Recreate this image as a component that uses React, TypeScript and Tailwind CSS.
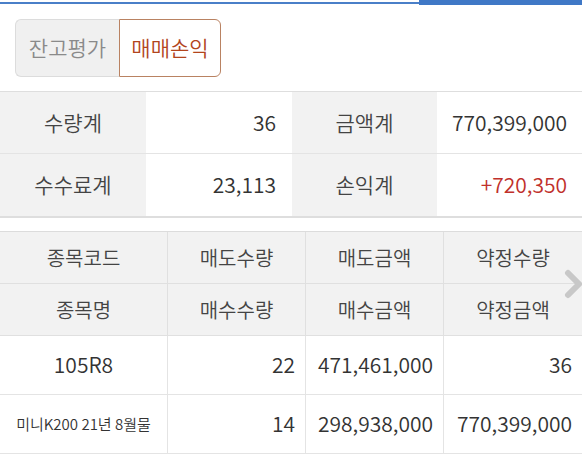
const FONT = { fontFamily: '"Noto Sans CJK KR", "Noto Sans", sans-serif' };

const SUMMARY = [
  { l1: "수량계", v1: "36", l2: "금액계", v2: "770,399,000", red: false },
  { l1: "수수료계", v1: "23,113", l2: "손익계", v2: "+720,350", red: true },
];

const HEAD = [
  ["종목코드", "매도수량", "매도금액", "약정수량"],
  ["종목명", "매수수량", "매수금액", "약정금액"],
];

const ROWS = [
  ["105R8", "22", "471,461,000", "36"],
  ["미니K200 21년 8월물", "14", "298,938,000", "770,399,000"],
];

export default function App() {
  return (
    <div className="relative h-[455px] w-[582px] overflow-hidden bg-white font-[350] text-[#333]" style={FONT}>
      {/* top indicator */}
      <div className="flex h-[5px] items-start">
        <div className="mt-[2px] h-[2px] flex-1 bg-[#4a7fc8]" />
        <div className="h-[5px] w-[163px] bg-[#3f78c6]" />
      </div>

      {/* tabs */}
      <div className="px-[15px] pt-[14px]">
        <div className="flex h-[58px] w-[206px]">
          <button className="flex w-[104px] items-center justify-center rounded-l-[6px] border border-r-0 border-[#dcdcdc] bg-[#f0f0f0] text-[21px] text-[#8a8a8a]">
            잔고평가
          </button>
          <button className="flex flex-1 items-center justify-center rounded-r-[6px] border border-[#b98262] bg-white text-[21px] text-[#b2451d]">
            매매손익
          </button>
        </div>
      </div>

      {/* summary */}
      <div className="mt-[14px] border-t border-b-2 border-[#dedede]">
        {SUMMARY.map((r, i) => (
          <div key={i} className={`grid h-[62px] grid-cols-[146px_146px_145px_145px] text-[21px] ${i === 0 ? "border-b border-[#e4e4e4]" : ""}`}>
            <div className="flex items-center justify-center bg-[#f2f2f2] text-[#444]">{r.l1}</div>
            <div className="flex items-center justify-end pr-[16px]">{r.v1}</div>
            <div className="flex items-center justify-center bg-[#f2f2f2] text-[#444]">{r.l2}</div>
            <div className={`flex items-center justify-end pr-[15px] ${r.red ? "text-[#c0302b]" : ""}`}>{r.v2}</div>
          </div>
        ))}
      </div>

      {/* list */}
      <div className="mt-[13px] border-t border-[#dcdcdc]">
        {HEAD.map((r, i) => (
          <div key={i} className="grid h-[52px] grid-cols-[167px_138px_138px_139px] border-b border-[#e0e0e0] bg-[#f2f2f2] text-[20px] text-[#444]">
            {r.map((c, j) => (
              <div key={j} className={`flex items-center justify-center ${j > 0 ? "border-l border-[#e0e0e0]" : ""}`}>{c}</div>
            ))}
          </div>
        ))}
        {ROWS.map((r, i) => (
          <div key={i} className="grid h-[59px] grid-cols-[167px_138px_138px_139px] border-b border-[#e4e4e4] text-[21px]">
            <div className={`flex items-center justify-center ${i === 1 ? "text-[15px]" : ""}`}>{r[0]}</div>
            {r.slice(1).map((c, j) => (
              <div key={j} className="flex items-center justify-end border-l border-[#e4e4e4] pr-[10px]">{c}</div>
            ))}
          </div>
        ))}
      </div>

      {/* scroll hint */}
      <svg className="absolute left-[564px] top-[269px]" width="22" height="30" viewBox="0 0 22 30">
        <polyline points="4,4 15,15 4,26" fill="none" stroke="#c8c8c8" strokeWidth="6" strokeLinecap="round" strokeLinejoin="round" />
      </svg>
    </div>
  );
}
